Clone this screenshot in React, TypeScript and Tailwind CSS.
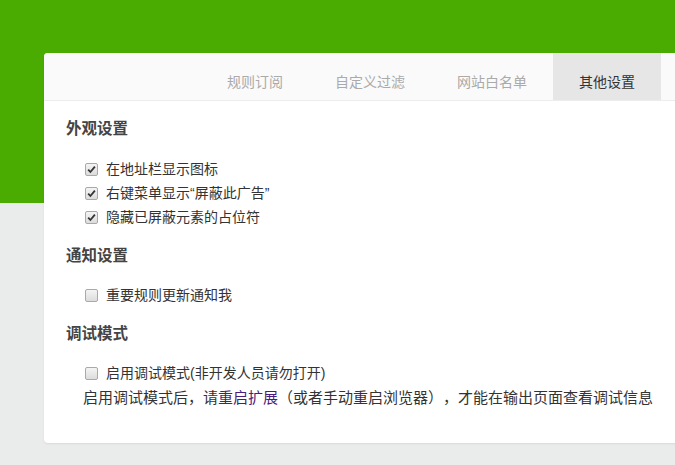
import React from 'react';

const tabs = ['规则订阅', '自定义过滤', '网站白名单', '其他设置'];

const Box: React.FC<{ checked?: boolean }> = ({ checked }) => (
  <span className="flex h-[13px] w-[13px] shrink-0 items-center justify-center rounded-[2px] border border-[#a9a9a9] bg-[linear-gradient(to_bottom,#f4f4f4,#dcdcdc)]">
    {checked && (
      <svg width="9" height="9" viewBox="0 0 9 9">
        <path d="M1.2 4.6 L3.4 7 L7.9 1.6" fill="none" stroke="#333" strokeWidth="1.8" />
      </svg>
    )}
  </span>
);

const Option: React.FC<{ label: string; checked?: boolean }> = ({ label, checked }) => (
  <label className="flex h-[24px] items-center gap-[8px] pl-[19px] text-[14px] text-[#333]">
    <Box checked={checked} />
    <span>{label}</span>
  </label>
);

const Heading: React.FC<{ text: string; className?: string }> = ({ text, className = '' }) => (
  <h2 className={`h-[24px] text-[15.5px] font-bold leading-[24px] text-[#444] ${className}`}>{text}</h2>
);

export default function App() {
  return (
    <div
      className="h-[465px] overflow-hidden bg-[linear-gradient(to_bottom,#4aab00_203px,#e9ecea_203px)] pt-[53px] pl-[44px]"
      style={{ fontFamily: '"Liberation Sans", "Noto Sans CJK SC", sans-serif' }}
    >
      <div className="w-[660px] rounded-[4px] bg-white shadow-[0_1px_2px_rgba(0,0,0,0.08)]">
        {/* tab bar */}
        <div className="flex h-[48px] justify-end rounded-t-[4px] border-b border-[#ececec] bg-[#fafafa] pr-[43px]">
          {tabs.map((t, i) => (
            <div
              key={t}
              className={`px-[26px] pt-[19px] text-[14px] leading-[20px] ${
                i === tabs.length - 1 ? 'bg-[#e6e6e6] text-[#333]' : 'text-[#aaa]'
              }`}
            >
              {t}
            </div>
          ))}
        </div>

        <div className="px-[22px] pt-[16px] pb-[34px]">
          <Heading text="外观设置" className="mb-[16px]" />
          <Option label="在地址栏显示图标" checked />
          <Option label="右键菜单显示“屏蔽此广告”" checked />
          <Option label="隐藏已屏蔽元素的占位符" checked />

          <Heading text="通知设置" className="mt-[15px] mb-[15px]" />
          <Option label="重要规则更新通知我" />

          <Heading text="调试模式" className="mt-[15px] mb-[15px]" />
          <Option label="启用调试模式(非开发人员请勿打开)" />
          <p
            className="h-[24px] pl-[17px] text-[15px] leading-[24px] text-[#333] whitespace-nowrap [text-spacing-trim:space-all]"
            style={{ fontFamily: '"Noto Sans CJK SC", sans-serif' }}
          >
            启用调试模式后，请<a className="text-[#4b1c7a]">重启扩展</a>（或者手动重启浏览器），才能在输出页面查看调试信息
          </p>
        </div>
      </div>
    </div>
  );
}
